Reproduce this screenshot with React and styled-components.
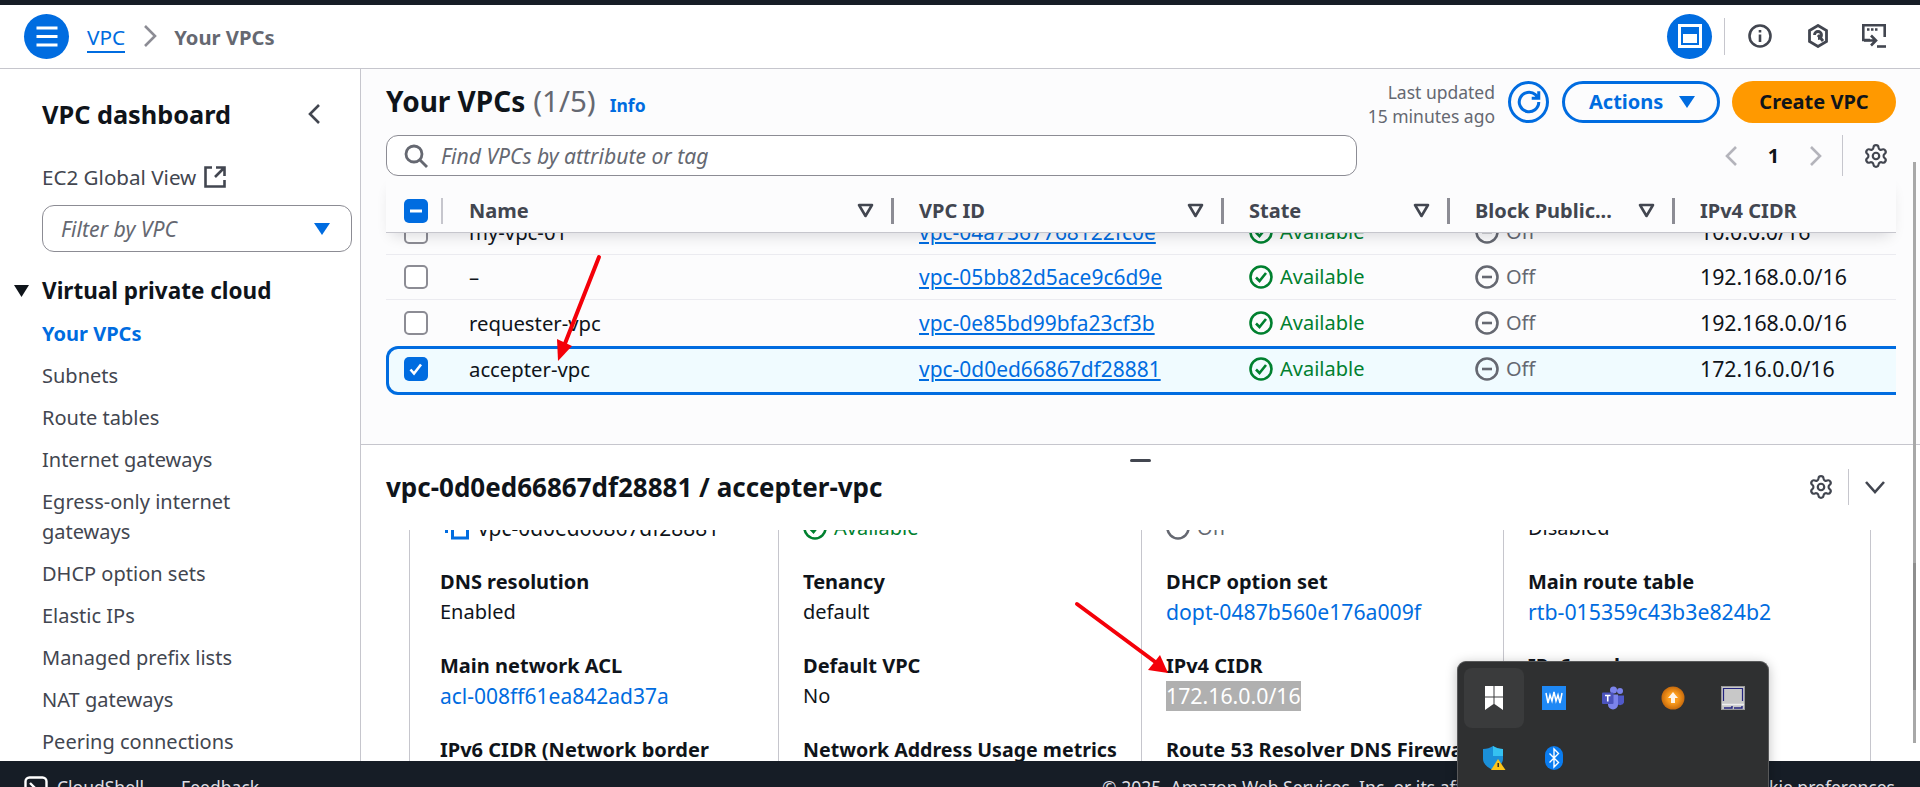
import React from "react";
import styled, { createGlobalStyle } from "styled-components";
import { Settings } from "lucide-react";

const BLUE = "#006ce0";
const INK = "#0f141a";
const GREY = "#424650";
const MUTED = "#656871";
const LINE = "#c6c6cd";
const DARK = "#161d26";
const TABLE_COLS = "57px 451px 330px 226px 225px 1fr";

const Global = createGlobalStyle`
  html, body { margin: 0; padding: 0; height: 100%; overflow: hidden; background: #fff; }
  body { font-family: "Noto Sans", "Open Sans", sans-serif; font-size: 20px; line-height: 30px; color: ${INK}; }
  * { box-sizing: border-box; }
`;

const Page = styled.div`
  position: relative;
  width: 1920px;
  height: 787px;
  overflow: hidden;
  display: flex;
  flex-direction: column;
`;
const TopStrip = styled.div`
  height: 5px;
  flex: none;
  background: ${DARK};
`;
const Header = styled.header`
  height: 64px;
  flex: none;
  display: flex;
  align-items: center;
  padding: 0 34px 1px 24px;
  background: #fff;
  border-bottom: 1px solid ${LINE};
`;
const RoundButton = styled.div`
  width: 45px;
  height: 45px;
  border-radius: 50%;
  background: ${BLUE};
  display: flex;
  align-items: center;
  justify-content: center;
  flex: none;
`;
const Crumb = styled.a`
  margin-left: 18px;
  color: ${BLUE};
  font-size: 20.8px;
  line-height: 28px;
  border-bottom: 2px solid ${BLUE};
  padding-top: 3px;
`;
const CrumbSep = styled.svg`
  width: 14px;
  height: 24px;
  margin: 0 17px 0 18px;
  flex: none;
`;
const CrumbCurrent = styled.span`
  color: ${MUTED};
  font-weight: 700;
  font-size: 20.2px;
  padding-top: 1px;
`;
const Spacer = styled.div`
  flex: 1;
`;
const HeaderDivider = styled.div`
  width: 1px;
  height: 37px;
  background: ${LINE};
  margin: 0 23px 0 12px;
`;
const HeaderIcon = styled.svg`
  width: 24px;
  height: 24px;
  flex: none;
  margin-right: ${(p) => p.$gap || 0}px;
  color: ${GREY};
`;

const Body = styled.div`
  flex: 1;
  min-height: 0;
  display: flex;
`;
const Sidebar = styled.aside`
  width: 361px;
  flex: none;
  border-right: 1px solid ${LINE};
  background: #fff;
  padding: 29px 8px 0 42px;
  overflow: hidden;
`;
const SideTop = styled.div`
  display: flex;
  align-items: center;
  justify-content: space-between;
  height: 32px;
  padding-right: 25px;
`;
const SideTitle = styled.h2`
  margin: 0;
  font-size: 25.3px;
  line-height: 32px;
  font-weight: 700;
`;
const SideLink = styled.div`
  margin-top: 32px;
  display: flex;
  align-items: center;
  gap: 8px;
  color: ${GREY};
  font-size: 20.6px;
`;
const FilterBox = styled.div`
  margin-top: 13px;
  height: 47px;
  border: 1px solid #8c8c94;
  border-radius: 12px;
  display: flex;
  align-items: center;
  justify-content: space-between;
  padding: 0 21px 0 18px;
  font-style: italic;
  font-size: 21.2px;
  color: ${MUTED};
`;
const SectionHead = styled.div`
  position: relative;
  margin-top: 24px;
  font-size: 22.5px;
  font-weight: 700;
`;
const SectionCaret = styled.svg`
  position: absolute;
  left: -28px;
  top: 9px;
  width: 15px;
  height: 12px;
`;
const NavList = styled.nav`
  margin-top: 13px;
  display: flex;
  flex-direction: column;
  gap: 12px;
`;
const NavItem = styled.a`
  color: ${(p) => (p.$active ? BLUE : GREY)};
  font-weight: ${(p) => (p.$active ? 700 : 400)};
  width: 250px;
`;

const Main = styled.main`
  flex: 1;
  min-width: 0;
  display: flex;
  flex-direction: column;
`;
const TablePanel = styled.section`
  height: 375px;
  flex: none;
  background: #fcfcfd;
  padding: 12px 24px 0 25px;
  display: flex;
  flex-direction: column;
`;
const TitleRow = styled.div`
  display: flex;
  align-items: center;
  height: 42px;
  flex: none;
`;
const PageTitle = styled.h1`
  margin: -2px 0 0;
  font-size: 28px;
  line-height: 40px;
  font-weight: 700;
`;
const Count = styled.span`
  font-weight: 400;
  font-size: 29.5px;
  color: ${MUTED};
  margin-left: 8px;
`;
const InfoLink = styled.a`
  margin-left: 14px;
  margin-top: 6px;
  color: ${BLUE};
  font-size: 17.5px;
  font-weight: 700;
`;
const Updated = styled.div`
  text-align: right;
  color: ${MUTED};
  font-size: 17.5px;
  line-height: 24px;
  margin-right: 13px;
  padding-top: 3px;
`;
const RefreshButton = styled.div`
  width: 41px;
  height: 42px;
  border-radius: 50%;
  border: 3px solid ${BLUE};
  display: flex;
  align-items: center;
  justify-content: center;
  margin-right: 13px;
`;
const OutlineButton = styled.div`
  width: 158px;
  height: 42px;
  border-radius: 21px;
  border: 3px solid ${BLUE};
  color: ${BLUE};
  font-weight: 700;
  display: flex;
  align-items: center;
  justify-content: space-between;
  padding: 0 22px 0 24px;
  margin-right: 12px;
`;
const PrimaryButton = styled.div`
  width: 164px;
  height: 42px;
  border-radius: 21px;
  background: #ff9900;
  color: ${INK};
  font-weight: 700;
  display: flex;
  align-items: center;
  justify-content: center;
`;
const SearchRow = styled.div`
  margin-top: 12px;
  height: 41px;
  flex: none;
  display: flex;
  align-items: center;
`;
const SearchBox = styled.div`
  width: 971px;
  height: 41px;
  background: #fff;
  border: 1px solid #8c8c94;
  border-radius: 12px;
  display: flex;
  align-items: center;
  gap: 13px;
  padding: 0 17px 0 17px;
  font-style: italic;
  font-size: 21.1px;
  color: ${MUTED};
`;
const Pager = styled.div`
  margin-left: auto;
  display: flex;
  align-items: center;
  color: ${INK};
  font-weight: 700;
  padding-right: 7px;
`;
const PagerNum = styled.span`
  width: 59px;
  text-align: center;
`;
const PagerDivider = styled.div`
  width: 1px;
  height: 42px;
  background: ${LINE};
  margin: 0 20px 0 15px;
`;
const TableHead = styled.div`
  position: relative;
  z-index: 1;
  height: 57px;
  flex: none;
  display: grid;
  grid-template-columns: ${TABLE_COLS};
  align-items: center;
  padding-top: 13px;
  background: #fcfcfd;
  border-bottom: 1px solid ${LINE};
  box-shadow: 0 8px 14px -6px rgba(0, 7, 22, 0.16);
`;
const HeadCell = styled.div`
  height: 26px;
  display: flex;
  align-items: center;
  justify-content: space-between;
  padding: 0 17px 0 ${(p) => p.$pad || 25}px;
  border-right: ${(p) => (p.$last ? "none" : `3px solid #8c8c94`)};
  color: ${GREY};
  font-weight: 700;
  white-space: nowrap;
`;
const SelectHead = styled.div`
  height: 26px;
  display: flex;
  align-items: center;
  padding-left: 18px;
  border-right: 2px solid ${LINE};
`;
const TableBody = styled.div`
  flex: 1;
  min-height: 0;
  overflow: hidden;
  display: flex;
  flex-direction: column;
`;
const RowList = styled.div`
  margin-top: -23px;
`;
const Row = styled.div`
  display: grid;
  grid-template-columns: ${TABLE_COLS};
  align-items: center;
  height: ${(p) => (p.$selected ? 49 : 45)}px;
  margin-top: ${(p) => (p.$selected ? 1 : 0)}px;
  margin-right: ${(p) => (p.$selected ? -20 : 0)}px;
  padding-bottom: ${(p) => (p.$selected ? 3 : 0)}px;
  border-bottom: ${(p) => (p.$plain || p.$selected ? "none" : "1px solid #ebebf0")};
  background: ${(p) => (p.$selected ? "#f0fbff" : "transparent")};
  box-shadow: ${(p) => (p.$selected ? `inset 0 0 0 3px ${BLUE}` : "none")};
  border-radius: ${(p) => (p.$selected ? "12px" : "0")};
`;
const SelectCell = styled.div`
  padding-left: 18px;
  display: flex;
  align-items: center;
  height: 24px;
`;
const Cell = styled.div`
  padding-left: ${(p) => p.$pad || 25}px;
  display: flex;
  align-items: center;
  gap: 7px;
  white-space: nowrap;
  font-size: ${(p) => p.$size || 20}px;
  color: ${(p) => p.$color || INK};
`;
const IdLink = styled.a`
  color: ${BLUE};
  font-size: 20.95px;
  text-decoration: underline;
  text-underline-offset: 2px;
`;
const Box = styled.div`
  width: 24px;
  height: 24px;
  border-radius: 5px;
  background: ${(p) => (p.$on ? BLUE : "#fff")};
  border: ${(p) => (p.$on ? "none" : "2px solid #8c8c94")};
  display: flex;
  align-items: center;
  justify-content: center;
`;
const Available = styled.span`
  color: #00802f;
`;
const OffLabel = styled.span`
  color: ${MUTED};
`;

const DetailPanel = styled.section`
  flex: 1;
  min-height: 0;
  background: #fff;
  border-top: 1px solid ${LINE};
  display: flex;
  flex-direction: column;
`;
const Handle = styled.div`
  width: 21px;
  height: 3px;
  background: ${GREY};
  border-radius: 2px;
  margin: 14px auto 0;
  flex: none;
`;
const DetailHead = styled.div`
  height: 40px;
  margin-top: 5px;
  padding: 0 33px 0 25px;
  display: flex;
  align-items: center;
  flex: none;
`;
const DetailTitle = styled.h2`
  margin: 0;
  font-size: 26px;
  line-height: 34px;
  font-weight: 700;
  flex: 1;
`;
const DetailDivider = styled.div`
  width: 1px;
  height: 36px;
  background: ${LINE};
  margin: 0 14px 0 14px;
`;
const DetailClip = styled.div`
  margin-top: 23px;
  flex: 1;
  min-height: 0;
  overflow: hidden;
  padding-left: 48px;
  display: grid;
  grid-template-columns: 369px 363px 362px 368px;
`;
const DetailColumn = styled.div`
  border-left: 1px solid ${LINE};
  border-right: ${(p) => (p.$last ? `1px solid ${LINE}` : "none")};
  padding: 0 15px 0 ${(p) => p.$pad || 24}px;
`;
const ColumnStack = styled.div`
  margin-top: -47px;
`;
const Pair = styled.div`
  height: 84px;
`;
const PairLabel = styled.div`
  font-weight: 700;
  font-size: ${(p) => p.$size || 20}px;
`;
const PairValue = styled.div`
  display: flex;
  align-items: center;
  gap: ${(p) => p.$gap || 7}px;
  padding-left: ${(p) => p.$indent || 0}px;
  font-size: ${(p) => p.$size || 20}px;
  color: ${(p) => p.$color || INK};
`;
const Highlight = styled.span`
  background: #b0b0b0;
  color: #fff;
`;

const Footer = styled.footer`
  height: 26px;
  flex: none;
  background: ${DARK};
  color: #dedee3;
  font-size: 17.5px;
  padding: 11px 25px 0 24px;
  display: flex;
  align-items: flex-start;
  overflow: hidden;
`;
const FooterLink = styled.span`
  margin-left: ${(p) => p.$gap || 0}px;
  white-space: nowrap;
`;
const FooterIcon = styled.svg`
  width: 24px;
  height: 24px;
  margin-top: 4px;
  margin-right: 9px;
  flex: none;
`;

const Annotations = styled.svg`
  position: absolute;
  inset: 0;
  width: 1920px;
  height: 787px;
  pointer-events: none;
`;
const ScrollTrack = styled.div`
  position: absolute;
  left: 1913px;
  top: 162px;
  width: 3px;
  height: 581px;
  background: #a8a8a8;
`;
const ScrollThumb = styled.div`
  position: absolute;
  left: 0;
  top: 401px;
  width: 3px;
  height: 127px;
  background: #8e8e8e;
`;
const Tray = styled.div`
  position: absolute;
  left: 1457px;
  top: 661px;
  width: 312px;
  height: 150px;
  background: #2f3031;
  border: 1px solid #58595a;
  border-bottom: none;
  border-radius: 9px 9px 0 0;
  box-shadow: 0 2px 12px rgba(0, 0, 0, 0.25);
  padding: 6px;
  display: grid;
  grid-template-columns: repeat(5, 59.8px);
  grid-auto-rows: 60px;
`;
const TrayCell = styled.div`
  display: flex;
  align-items: center;
  justify-content: center;
  border-radius: 8px;
  background: ${(p) => (p.$active ? "#3a3b3c" : "transparent")};
`;

const Gear = styled(Settings)`
  width: 26px;
  height: 26px;
  color: ${GREY};
  flex: none;
`;

const Chevron = ({ dir = "right", color = GREY, size = 24 }) => {
  const d = { right: "M8 3l9 9-9 9", left: "M16 3l-9 9 9 9", down: "M3 7l9 10 9-10" }[dir];
  return (
    <svg width={size} height={size} viewBox="0 0 24 24" fill="none" stroke={color} strokeWidth="2.6">
      <path d={d} />
    </svg>
  );
};
const Caret = ({ color = BLUE, w = 16, h = 12 }) => (
  <svg width={w} height={h} viewBox="0 0 16 12">
    <path d="M0 0h16L8 12z" fill={color} />
  </svg>
);
const SortIcon = () => (
  <svg width="17" height="15" viewBox="0 0 17 15" fill="none" stroke={GREY} strokeWidth="2.6" strokeLinejoin="round">
    <path d="M2 2h13L8.500 13z" />
  </svg>
);
const OkIcon = () => (
  <svg width="24" height="24" viewBox="0 0 24 24" fill="none" stroke="#00802f" strokeWidth="2.6" style={{ flex: "none" }}>
    <circle cx="12" cy="12" r="10.500" />
    <path d="M7 12.500l3.500 3.500 6.500-8" />
  </svg>
);
const OffIcon = () => (
  <svg width="24" height="24" viewBox="0 0 24 24" fill="none" stroke={MUTED} strokeWidth="2.6" style={{ flex: "none" }}>
    <circle cx="12" cy="12" r="10.500" />
    <path d="M7 12h10" />
  </svg>
);
const Check = ({ state }) => (
  <Box $on={!!state}>
    {state === "all" && (
      <svg width="16" height="16" viewBox="0 0 16 16" fill="none" stroke="#fff" strokeWidth="2.600">
        <path d="M2.500 8.500l3.500 4 7-9" />
      </svg>
    )}
    {state === "some" && (
      <svg width="16" height="16" viewBox="0 0 16 16" fill="none" stroke="#fff" strokeWidth="3">
        <path d="M2 8h12" />
      </svg>
    )}
  </Box>
);

const rows = [
  { name: "my-vpc-01", id: "vpc-04a7367768122fc0e", cidr: "10.0.0.0/16" },
  { name: "–", id: "vpc-05bb82d5ace9c6d9e", cidr: "192.168.0.0/16" },
  { name: "requester-vpc", id: "vpc-0e85bd99bfa23cf3b", cidr: "192.168.0.0/16", plain: true },
  { name: "accepter-vpc", id: "vpc-0d0ed66867df28881", cidr: "172.16.0.0/16", selected: true },
];
const navItems = [
  "Subnets",
  "Route tables",
  "Internet gateways",
  "Egress-only internet gateways",
  "DHCP option sets",
  "Elastic IPs",
  "Managed prefix lists",
  "NAT gateways",
  "Peering connections",
];

const CopyIcon = () => (
  <svg width="24" height="24" viewBox="0 0 24 24" fill="none" stroke={BLUE} strokeWidth="3" style={{ flex: "none" }}>
    <rect x="7.500" y="5" width="15" height="17" />
    <path d="M1.500 2v15" />
  </svg>
);

const ShieldWarn = () => (
  <svg width="24" height="24" viewBox="0 0 24 24">
    <path d="M11 0c3 2 6 3 10 3v10c0 5-5 9-10 11C6 22 1 18 1 13V3c4 0 7-1 10-3z" fill="#1b8fd8" />
    <path d="M11 0c3 2 6 3 10 3v7H11z" fill="#35c1f1" />
    <path d="M16 13l7.500 11H9z" fill="#fcc419" />
    <path d="M16.200 17v4" stroke="#222" strokeWidth="1.400" />
  </svg>
);

export default function App() {
  return (
    <Page>
      <Global />
      <TopStrip />
      <Header>
        <RoundButton>
          <svg width="24" height="24" viewBox="0 0 24 24" stroke="#fff" strokeWidth="3">
            <path d="M1.500 4h21M1.500 12.500h21M1.500 21h21" />
          </svg>
        </RoundButton>
        <Crumb>VPC</Crumb>
        <CrumbSep viewBox="0 0 14 24" fill="none" stroke="#8c8c94" strokeWidth="2.600">
          <path d="M2 2l10 10L2 22" />
        </CrumbSep>
        <CrumbCurrent>Your VPCs</CrumbCurrent>
        <Spacer />
        <RoundButton>
          <svg width="24" height="24" viewBox="0 0 24 24">
            <path d="M0 0h24v24H0zM3 3v18h18V3z" fill="#fff" fillRule="evenodd" />
            <rect x="5" y="10" width="14" height="9" fill="#fff" />
          </svg>
        </RoundButton>
        <HeaderDivider />
        <HeaderIcon $gap={34} viewBox="0 0 24 24" fill="none" stroke="currentColor" strokeWidth="2.600">
          <circle cx="12" cy="12" r="10.500" />
          <path d="M12 10.500V18M12 6v2.600" />
        </HeaderIcon>
        <HeaderIcon $gap={32} viewBox="0 0 24 24" fill="none" stroke="currentColor" strokeWidth="2.800">
          <path d="M12 1.500l8.500 5v11l-8.500 5-8.500-5v-11z" />
          <path d="M8.500 11a3.500 3.500 0 1 1 3.500 3.500" />
          <path d="M12 11l5 6" />
        </HeaderIcon>
        <HeaderIcon viewBox="0 0 24 24" fill="none" stroke="currentColor" strokeWidth="2.600">
          <path d="M8 16H1.300V1.300h21.400V13" />
          <path d="M5 5.500h2.500M9 5.500h2.500M13 5.500h2.500" strokeWidth="2.600" />
          <path d="M9 11.500l5 5-5 5M2 16.500h11" />
          <path d="M15 22.500h9" />
        </HeaderIcon>
      </Header>
      <Body>
        <Sidebar>
          <SideTop>
            <SideTitle>VPC dashboard</SideTitle>
            <Chevron dir="left" color={GREY} />
          </SideTop>
          <SideLink>
            EC2 Global View
            <svg width="22" height="22" viewBox="0 0 22 22" fill="none" stroke={GREY} strokeWidth="2.600">
              <path d="M8 1.500H1.500v19h19V14M12 1.500h8.500V10M20 2l-9 9" />
            </svg>
          </SideLink>
          <FilterBox>
            Filter by VPC
            <Caret />
          </FilterBox>
          <SectionHead>
            <SectionCaret viewBox="0 0 15 12">
              <path d="M0 0h15L7.500 12z" fill={INK} />
            </SectionCaret>
            Virtual private cloud
          </SectionHead>
          <NavList>
            <NavItem $active>Your VPCs</NavItem>
            {navItems.map((n) => (
              <NavItem key={n}>{n}</NavItem>
            ))}
          </NavList>
        </Sidebar>
        <Main>
          <TablePanel>
            <TitleRow>
              <PageTitle>
                Your VPCs<Count>(1/5)</Count>
              </PageTitle>
              <InfoLink>Info</InfoLink>
              <Spacer />
              <Updated>
                Last updated
                <br />
                15 minutes ago
              </Updated>
              <RefreshButton>
                <svg width="26" height="26" viewBox="0 0 24 24" fill="none" stroke={BLUE} strokeWidth="2.800">
                  <path d="M21 12a9 9 0 1 1-3-6.700L20.500 8M21 2v6.500h-6.500" />
                </svg>
              </RefreshButton>
              <OutlineButton>
                Actions
                <Caret />
              </OutlineButton>
              <PrimaryButton>Create VPC</PrimaryButton>
            </TitleRow>
            <SearchRow>
              <SearchBox>
                <svg width="24" height="24" viewBox="0 0 24 24" fill="none" stroke={MUTED} strokeWidth="2.800" style={{ flex: "none" }}>
                  <circle cx="10" cy="10" r="8" />
                  <path d="M16 16l7 7" />
                </svg>
                Find VPCs by attribute or tag
              </SearchBox>
              <Pager>
                <Chevron dir="left" color="#b4b4bb" />
                <PagerNum>1</PagerNum>
                <Chevron dir="right" color="#b4b4bb" />
                <PagerDivider />
                <Gear />
              </Pager>
            </SearchRow>
            <TableHead>
              <SelectHead>
                <Check state="some" />
              </SelectHead>
              <HeadCell $pad={26}>
                Name
                <SortIcon />
              </HeadCell>
              <HeadCell>
                VPC ID
                <SortIcon />
              </HeadCell>
              <HeadCell>
                State
                <SortIcon />
              </HeadCell>
              <HeadCell>
                Block Public...
                <SortIcon />
              </HeadCell>
              <HeadCell $last>IPv4 CIDR</HeadCell>
            </TableHead>
            <TableBody>
              <RowList>
                {rows.map((r) => (
                  <Row key={r.id} $selected={r.selected} $plain={r.plain}>
                    <SelectCell>
                      <Check state={r.selected ? "all" : null} />
                    </SelectCell>
                    <Cell $pad={26} $size={20.3}>{r.name}</Cell>
                    <Cell>
                      <IdLink>{r.id}</IdLink>
                    </Cell>
                    <Cell>
                      <OkIcon />
                      <Available>Available</Available>
                    </Cell>
                    <Cell>
                      <OffIcon />
                      <OffLabel>Off</OffLabel>
                    </Cell>
                    <Cell $size={21.3}>{r.cidr}</Cell>
                  </Row>
                ))}
              </RowList>
            </TableBody>
          </TablePanel>
          <DetailPanel>
            <Handle />
            <DetailHead>
              <DetailTitle>vpc-0d0ed66867df28881 / accepter-vpc</DetailTitle>
              <Gear />
              <DetailDivider />
              <Chevron dir="down" color={GREY} />
            </DetailHead>
            <DetailClip>
              <DetailColumn $pad={30}>
                <ColumnStack>
                  <Pair>
                    <PairLabel>VPC ID</PairLabel>
                    <PairValue $indent={5} $gap={9} $size={20.9}>
                      <CopyIcon />
                      vpc-0d0ed66867df28881
                    </PairValue>
                  </Pair>
                  <Pair>
                    <PairLabel>DNS resolution</PairLabel>
                    <PairValue>Enabled</PairValue>
                  </Pair>
                  <Pair>
                    <PairLabel>Main network ACL</PairLabel>
                    <PairValue $color={BLUE} $size={21}>acl-008ff61ea842ad37a</PairValue>
                  </Pair>
                  <Pair>
                    <PairLabel>IPv6 CIDR (Network border group)</PairLabel>
                  </Pair>
                </ColumnStack>
              </DetailColumn>
              <DetailColumn>
                <ColumnStack>
                  <Pair>
                    <PairLabel>State</PairLabel>
                    <PairValue>
                      <OkIcon />
                      <Available>Available</Available>
                    </PairValue>
                  </Pair>
                  <Pair>
                    <PairLabel>Tenancy</PairLabel>
                    <PairValue>default</PairValue>
                  </Pair>
                  <Pair>
                    <PairLabel>Default VPC</PairLabel>
                    <PairValue>No</PairValue>
                  </Pair>
                  <Pair>
                    <PairLabel $size={19.6}>Network Address Usage metrics</PairLabel>
                  </Pair>
                </ColumnStack>
              </DetailColumn>
              <DetailColumn>
                <ColumnStack>
                  <Pair>
                    <PairLabel>Block Public Access</PairLabel>
                    <PairValue>
                      <OffIcon />
                      <OffLabel>Off</OffLabel>
                    </PairValue>
                  </Pair>
                  <Pair>
                    <PairLabel>DHCP option set</PairLabel>
                    <PairValue $color={BLUE} $size={21.2}>dopt-0487b560e176a009f</PairValue>
                  </Pair>
                  <Pair>
                    <PairLabel>IPv4 CIDR</PairLabel>
                    <PairValue $size={21.3}>
                      <Highlight>172.16.0.0/16</Highlight>
                    </PairValue>
                  </Pair>
                  <Pair>
                    <PairLabel>Route 53 Resolver DNS Firewall rule groups</PairLabel>
                  </Pair>
                </ColumnStack>
              </DetailColumn>
              <DetailColumn $last>
                <ColumnStack>
                  <Pair>
                    <PairLabel>DNS hostnames</PairLabel>
                    <PairValue>Disabled</PairValue>
                  </Pair>
                  <Pair>
                    <PairLabel>Main route table</PairLabel>
                    <PairValue $color={BLUE} $size={21.3}>rtb-015359c43b3e824b2</PairValue>
                  </Pair>
                  <Pair>
                    <PairLabel>IPv6 pool</PairLabel>
                  </Pair>
                </ColumnStack>
              </DetailColumn>
            </DetailClip>
          </DetailPanel>
        </Main>
      </Body>
      <Footer>
        <FooterIcon viewBox="0 0 24 24" fill="none" stroke="#fff" strokeWidth="2.400">
          <rect x="1.500" y="1.500" width="21" height="21" rx="4" />
          <path d="M6 7l5 5-5 5" />
        </FooterIcon>
        <FooterLink>CloudShell</FooterLink>
        <FooterLink $gap={37}>Feedback</FooterLink>
        <Spacer />
        <FooterLink>© 2025, Amazon Web Services, Inc. or its affiliates.</FooterLink>
        <FooterLink $gap={38}>Privacy</FooterLink>
        <FooterLink $gap={38}>Terms</FooterLink>
        <FooterLink $gap={38}>Cookie preferences</FooterLink>
      </Footer>

      <ScrollTrack>
        <ScrollThumb />
      </ScrollTrack>

      <Annotations viewBox="0 0 1920 787">
        <path d="M599 257L564 346" stroke="#f40009" strokeWidth="4" strokeLinecap="round" fill="none" />
        <path d="M558 361L557 339L572 346z" fill="#f40009" />
        <path d="M1077 604L1158 664" stroke="#f40009" strokeWidth="4" strokeLinecap="round" fill="none" />
        <path d="M1168 673L1148 670L1160 655z" fill="#f40009" />
      </Annotations>

      <Tray>
        <TrayCell $active>
          <svg width="18" height="24" viewBox="0 0 18 24" fill="#fff">
            <rect x="0" y="0" width="8.500" height="10.500" />
            <rect x="9.500" y="0" width="8.500" height="10.500" />
            <path d="M0 11.500h8.500v6.500L0 24zM9.500 11.500H18V24l-8.500-6z" />
          </svg>
        </TrayCell>
        <TrayCell>
          <svg width="24" height="24" viewBox="0 0 24 24">
            <rect width="24" height="24" fill="#1e88f5" />
            <path d="M4 7l2 10 2-8 2 6 2-9 2 9 2-6 2 8 2-10" fill="none" stroke="#fff" strokeWidth="1.500" />
          </svg>
        </TrayCell>
        <TrayCell>
          <svg width="24" height="24" viewBox="0 0 24 24">
            <circle cx="19" cy="5" r="3" fill="#7b83eb" />
            <circle cx="12.500" cy="4" r="3.500" fill="#7b83eb" />
            <path d="M16 9.500h7v7a4 4 0 0 1-7 1z" fill="#5059c9" />
            <path d="M7 8.500h10v10a5 5 0 0 1-10 0z" fill="#7b83eb" />
            <rect x="1" y="6.500" width="11.500" height="11.500" rx="1" fill="#4b53bc" />
            <path d="M4 9.500h5.500M6.750 9.500v6" stroke="#fff" strokeWidth="1.600" />
          </svg>
        </TrayCell>
        <TrayCell>
          <svg width="24" height="24" viewBox="0 0 24 24">
            <defs>
              <radialGradient id="orb">
                <stop offset="0.450" stopColor="#fb9c1e" />
                <stop offset="1" stopColor="#c76a0c" />
              </radialGradient>
            </defs>
            <circle cx="12" cy="12" r="11.500" fill="url(#orb)" />
            <path d="M12 6l5 6h-3v5h-4v-5H7z" fill="#fff" opacity="0.900" />
          </svg>
        </TrayCell>
        <TrayCell>
          <svg width="24" height="24" viewBox="0 0 24 24">
            <rect width="24" height="24" fill="#9a9a9a" />
            <rect x="1" y="1" width="22" height="22" fill="#c8c8c8" />
            <path d="M2.500 15V2.500h19V15" fill="none" stroke="#23237e" strokeWidth="1.200" />
            <path d="M1 18.500h22" stroke="#eee" strokeWidth="1.500" />
            <path d="M3 22h8v-2M13 22h8v-2" fill="none" stroke="#23237e" strokeWidth="1.400" />
          </svg>
        </TrayCell>
        <TrayCell>
          <ShieldWarn />
        </TrayCell>
        <TrayCell>
          <svg width="18" height="24" viewBox="0 0 18 24">
            <rect width="18" height="24" rx="9" fill="#0a7cf0" />
            <path d="M4.500 7.500l9 9L9 21V3l4.500 4.500-9 9" fill="none" stroke="#fff" strokeWidth="1.400" />
          </svg>
        </TrayCell>
      </Tray>
    </Page>
  );
}
